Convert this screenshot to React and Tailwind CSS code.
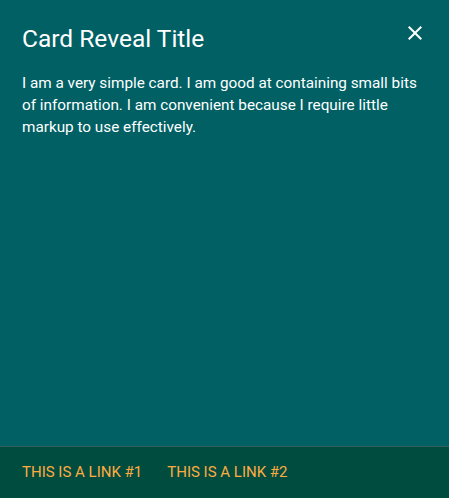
export default function App() {
  return (
    <div className="flex h-[498px] w-full flex-col bg-[#006064] text-white" style={{ fontFamily: 'Roboto, "Liberation Sans", sans-serif' }}>
      {/* Reveal content */}
      <div className="flex-1 px-[22px] pt-[23px]">
        <div className="flex items-start justify-between">
          <span className="text-[24.5px] leading-[32px] font-normal">Card Reveal Title</span>
          <svg viewBox="0 0 24 24" className="mt-[-2px] h-6 w-6" fill="currentColor">
            <path d="M19 6.41L17.59 5 12 10.59 6.41 5 5 6.41 10.59 12 5 17.59 6.41 19 12 13.41 17.59 19 19 17.59 13.41 12z" />
          </svg>
        </div>
        <p className="mt-[17px] text-[15.3px] leading-[22px]">
          I am a very simple card. I am good at containing small bits of information. I am convenient because I require little markup to use effectively.
        </p>
      </div>

      {/* Action bar */}
      <div className="flex h-[52px] items-center gap-[25px] border-t border-[#2f5e5b] bg-[#004d40] px-[22px] text-[15px] uppercase text-[#ffab40]">
        <a>This is a link #1</a>
        <a>This is a link #2</a>
      </div>
    </div>
  );
}
